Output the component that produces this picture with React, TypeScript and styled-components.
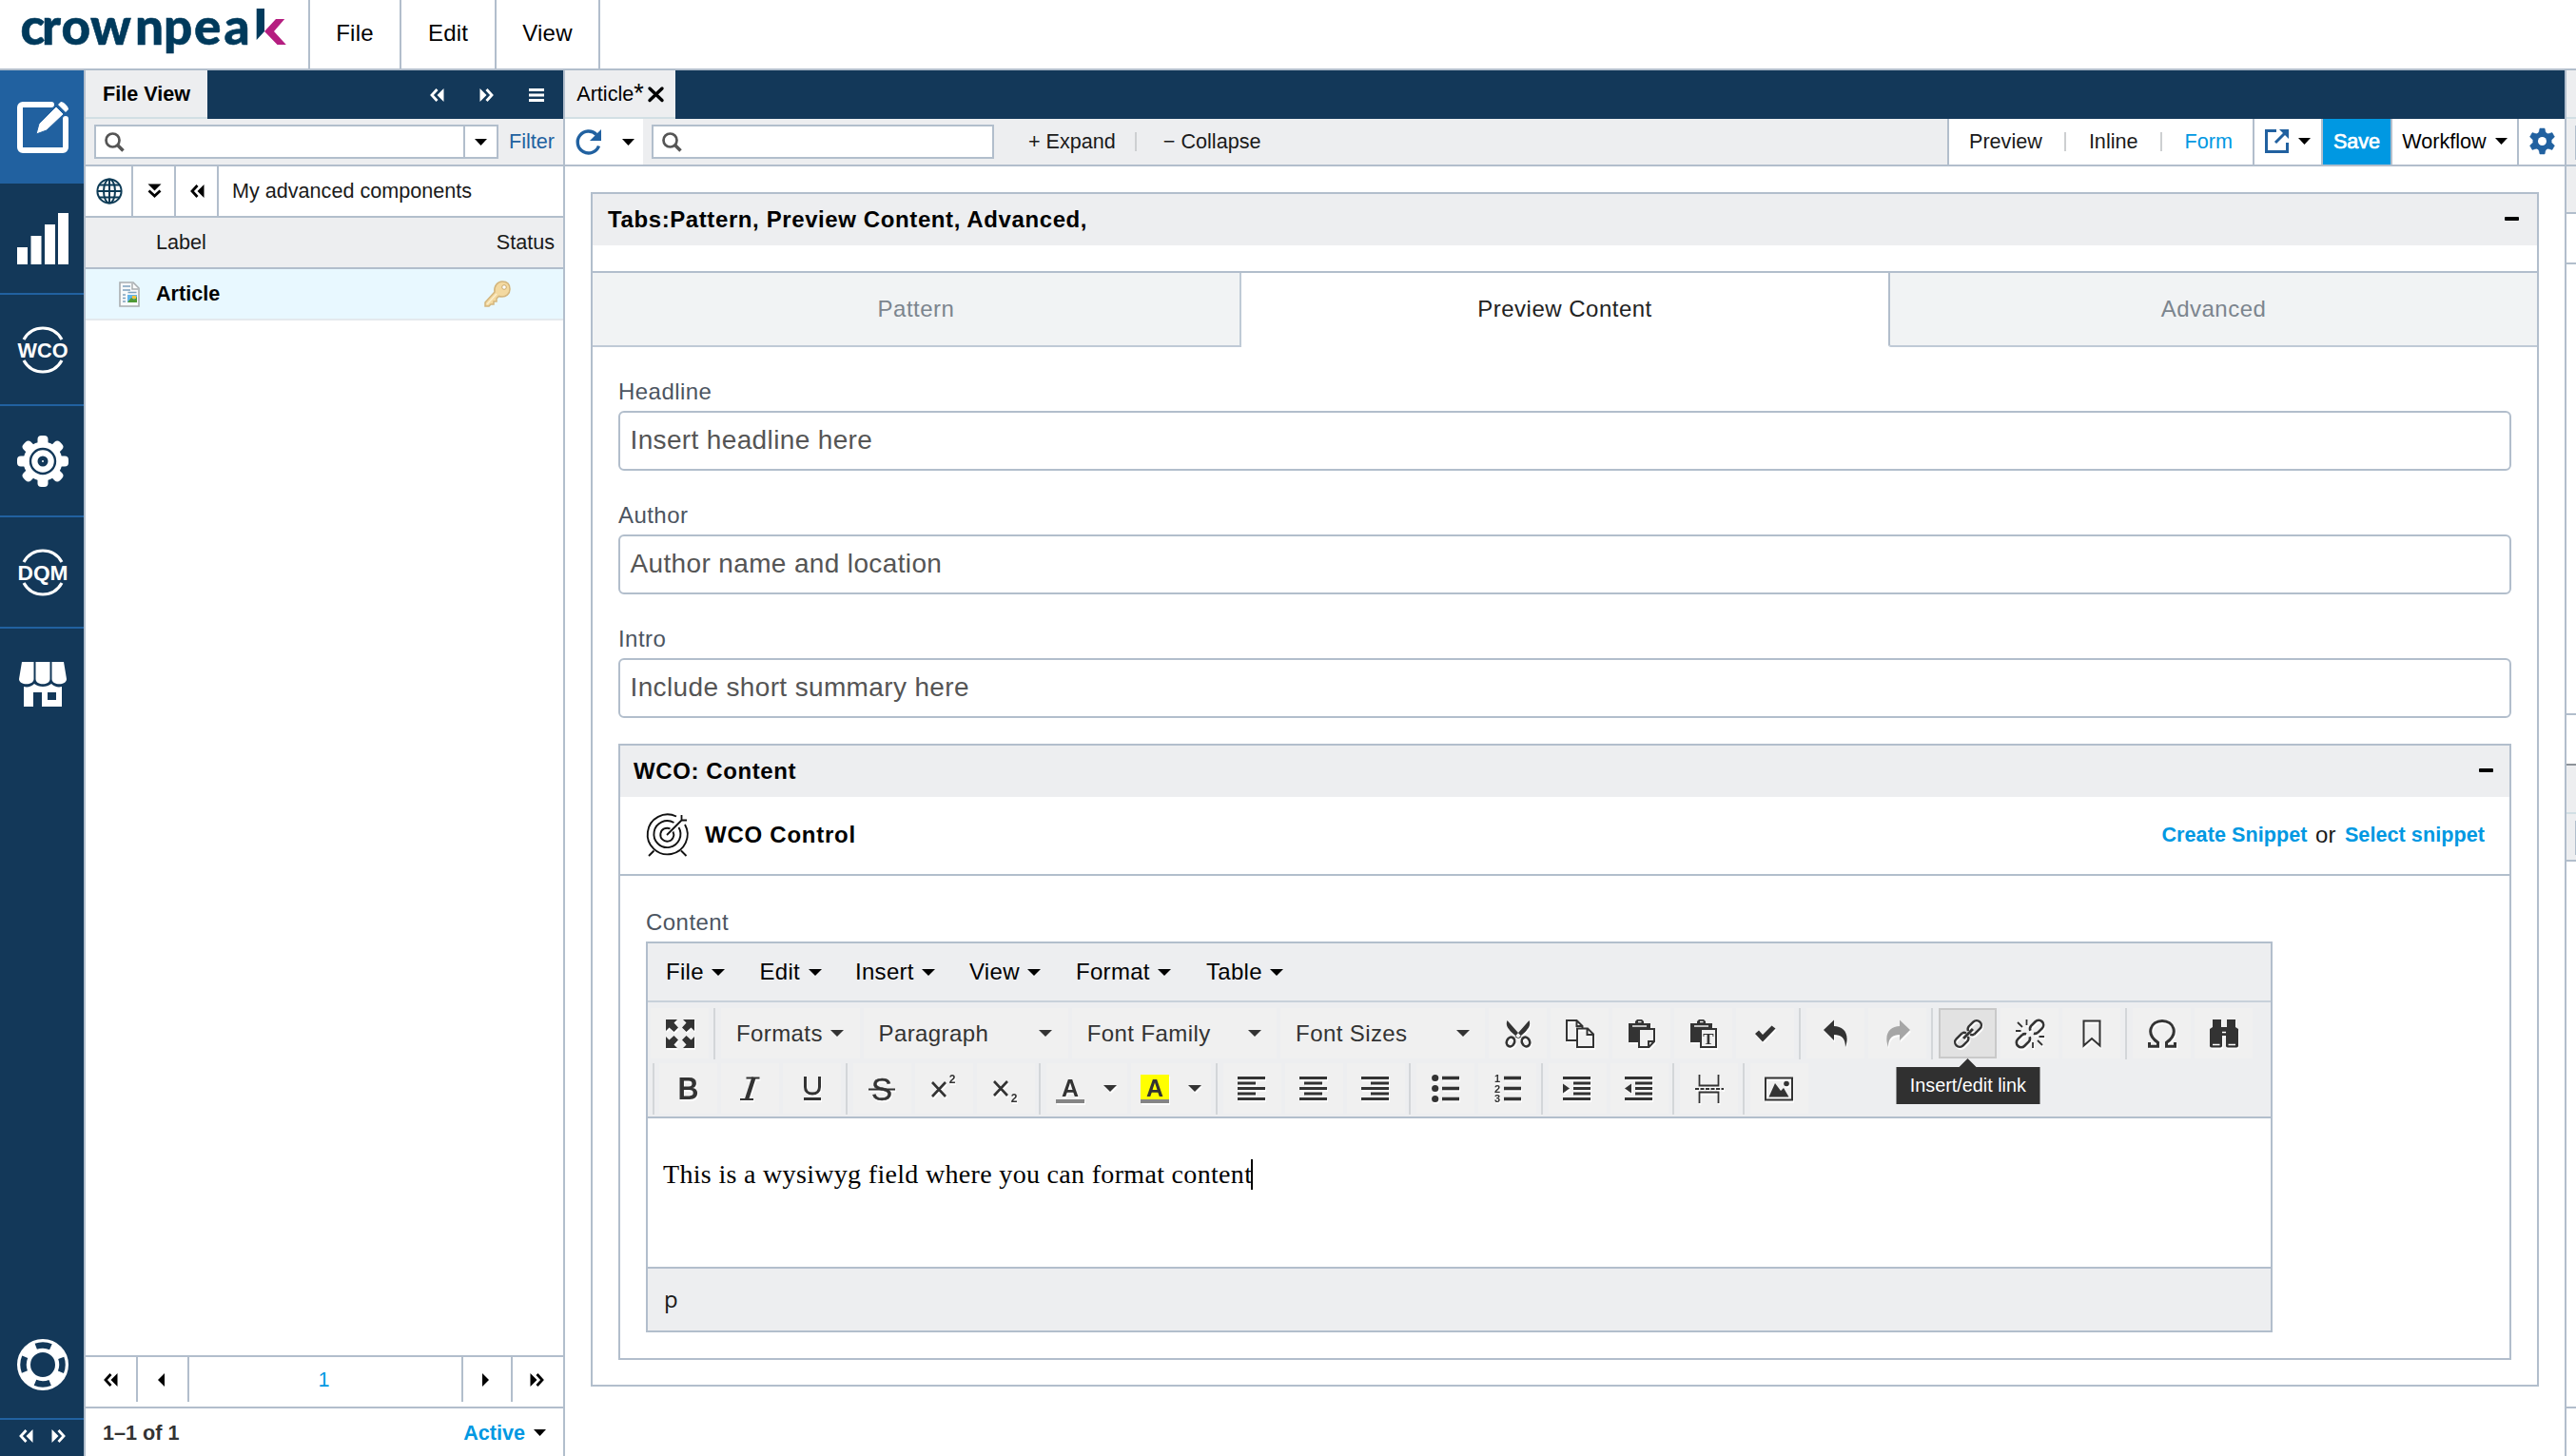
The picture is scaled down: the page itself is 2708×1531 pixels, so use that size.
import React from "react";
import styled, { createGlobalStyle } from "styled-components";

const navy = "#133859";
const blue = "#2161a0";
const sky = "#0098e2";
const line = "#b2becc";
const grey = "#edeef0";
const ink = "#333";

const GlobalStyle = createGlobalStyle`
  * {
    box-sizing: border-box;
  }
  body {
    margin: 0;
    overflow: hidden;
    background: #fff;
    font-family: "Liberation Sans", Arial, sans-serif;
    font-size: 21.6px;
    color: #1a1a1a;
  }
  svg {
    display: block;
    flex: none;
    overflow: visible;
  }
`;

const Page = styled.div`
  height: 100vh;
  display: flex;
  flex-direction: column;
`;

/* ---------- top bar ---------- */

const TopBar = styled.header`
  height: 74px;
  flex: none;
  display: flex;
  border-bottom: 2px solid ${line};
`;

const LogoBox = styled.div`
  width: 326px;
  border-right: 2px solid ${line};
`;

const TopMenu = styled.div<{ $w: number }>`
  width: ${(p) => p.$w}px;
  padding-bottom: 3px;
  display: flex;
  align-items: center;
  justify-content: center;
  border-right: 2px solid ${line};
  font-size: 24px;
  letter-spacing: 0.2px;
  color: #000;
`;

const Body = styled.div`
  flex: 1;
  min-height: 0;
  display: flex;
`;

/* ---------- left navigation ---------- */

const Nav = styled.nav`
  width: 90px;
  flex: none;
  display: flex;
  flex-direction: column;
  background: ${navy};
  border-right: 2px solid ${line};
`;

const NavItem = styled.div<{ $active?: boolean }>`
  height: ${(p) => (p.$active ? 119 : 117)}px;
  padding-left: 2px;
  display: flex;
  align-items: center;
  justify-content: center;
  background: ${(p) => (p.$active ? blue : "transparent")};
  border-bottom: ${(p) => (p.$active ? "none" : `2px solid ${blue}`)};

  &:nth-child(6) {
    border-bottom: none;
  }
`;

const NavHelp = styled.div`
  margin-top: auto;
  height: 85px;
  padding-left: 18px;
  border-bottom: 2px solid ${blue};
`;

const NavPager = styled.div`
  height: 38px;
  padding: 10px 0 0 20px;
  display: flex;
  gap: 19px;
`;

/* ---------- file panel ---------- */

const FilePanel = styled.aside`
  width: 504px;
  flex: none;
  display: flex;
  flex-direction: column;
  border-right: 2px solid ${line};
`;

const TabStrip = styled.div`
  height: 51px;
  flex: none;
  display: flex;
  background: ${navy};
`;

const Tab = styled.div<{ $w: number; $bold?: boolean }>`
  width: ${(p) => p.$w}px;
  display: flex;
  align-items: center;
  justify-content: center;
  background: ${grey};
  border-bottom: 2px solid #d2dfe4;
  font-weight: ${(p) => (p.$bold ? 700 : 400)};
  color: #000;
`;

const StripTools = styled.div`
  margin-left: auto;
  padding-right: 20px;
  display: flex;
  align-items: center;
  gap: 37px;
`;

const FilterRow = styled.div`
  height: 50px;
  flex: none;
  padding: 0 9px;
  display: flex;
  align-items: center;
  justify-content: space-between;
  background: ${grey};
  border-bottom: 2px solid ${line};
  color: ${blue};
`;

const SearchBox = styled.div<{ $w: number }>`
  width: ${(p) => p.$w}px;
  height: 36px;
  padding-left: 9px;
  display: flex;
  align-items: center;
  background: #fff;
  border: 2px solid ${line};
`;

const SearchDrop = styled.div`
  width: 35px;
  height: 100%;
  margin-left: auto;
  display: flex;
  align-items: center;
  justify-content: center;
  border-left: 2px solid ${line};
`;

const PathRow = styled.div`
  height: 54px;
  flex: none;
  display: flex;
  border-bottom: 2px solid ${line};
`;

const PathCell = styled.div<{ $w: number }>`
  width: ${(p) => p.$w}px;
  padding-left: 1px;
  display: flex;
  align-items: center;
  justify-content: center;
  border-right: 2px solid ${line};
`;

const PathName = styled.div`
  padding-left: 14px;
  display: flex;
  align-items: center;
`;

const ListHead = styled.div`
  height: 54px;
  flex: none;
  padding: 0 9px 0 74px;
  display: flex;
  align-items: center;
  justify-content: space-between;
  background: ${grey};
  border-bottom: 2px solid ${line};
`;

const ListRow = styled.div`
  height: 54px;
  flex: none;
  padding: 0 55px 0 35px;
  display: flex;
  align-items: center;
  background: #e8f8ff;
  border-bottom: 2px solid #e4e9ed;
`;

const RowLabel = styled.div`
  margin: 0 auto 0 17px;
  font-weight: 700;
  color: #000;
`;

const Pager = styled.div`
  height: 56px;
  margin-top: auto;
  flex: none;
  padding-bottom: 5px;
  display: flex;
  border-top: 2px solid ${line};
  border-bottom: 2px solid ${line};
`;

const PagerCell = styled.div<{ $w: number }>`
  width: ${(p) => p.$w}px;
  display: flex;
  align-items: center;
  justify-content: center;
  color: ${sky};

  & + & {
    padding-right: 3px;
    border-left: 2px solid ${line};
  }
`;

const PanelFooter = styled.div`
  height: 50px;
  flex: none;
  padding: 1px 18px 0 18px;
  display: flex;
  align-items: center;
  font-weight: 700;
  color: ${ink};
`;

const ActiveFilter = styled.div`
  margin-left: auto;
  display: flex;
  align-items: center;
  gap: 9px;
  color: ${sky};
`;

/* ---------- main area ---------- */

const Main = styled.main`
  flex: 1;
  min-width: 0;
  display: flex;
  flex-direction: column;
`;

const Star = styled.span`
  font-size: 27px;
  line-height: 1;
  margin-right: 4px;
`;

const Toolbar = styled.div`
  height: 50px;
  flex: none;
  display: flex;
  background: ${grey};
  border-bottom: 2px solid ${line};
`;

const RefreshCell = styled.div`
  width: 82px;
  padding: 0 9px 0 11px;
  display: flex;
  align-items: center;
  justify-content: space-between;
  background: #fff;
`;

const SearchCell = styled.div`
  padding: 6px 36px 0 9px;
`;

const ToolText = styled.div`
  padding-bottom: 1px;
  display: flex;
  align-items: center;
`;

const Divider = styled.div`
  width: 2px;
  height: 20px;
  align-self: center;
  background: #cdcfd1;
`;

const ExpandTools = styled.div`
  display: flex;

  ${Divider} {
    margin: 0 28px 0 20px;
  }
`;

const ViewSwitch = styled.div`
  margin-left: auto;
  width: 321px;
  padding: 0 21px 0 21px;
  display: flex;
  justify-content: space-between;
  background: #fff;
  border-left: 2px solid ${line};
`;

const ToolCell = styled.div<{ $w: number; $gap?: number }>`
  width: ${(p) => p.$w}px;
  padding-bottom: 1px;
  display: flex;
  align-items: center;
  justify-content: center;
  gap: ${(p) => p.$gap ?? 0}px;
  background: #fff;
  border-left: 2px solid ${line};
  color: #000;
`;

const SaveCell = styled(ToolCell)`
  background: ${sky};
  color: #fff;
  -webkit-text-stroke: 0.7px #fff;
`;

const Blue = styled.span`
  color: ${sky};
`;

const Content = styled.div`
  padding: 27px 27px 0;
`;

const Card = styled.section`
  height: 1256px;
  border: 2px solid ${line};
`;

const CardHead = styled.div<{ $pad: number }>`
  height: 54px;
  padding: 0 ${(p) => p.$pad}px 0 ${(p) => p.$pad - 3}px;
  display: flex;
  align-items: center;
  justify-content: space-between;
  background: ${grey};
  font-size: 24px;
  font-weight: 700;
  letter-spacing: 0.6px;
  color: #000;
`;

const Minus = styled.i`
  width: 15px;
  height: 4px;
  margin-bottom: 2px;
  border-radius: 1px;
  background: #000;
`;

const FormTabs = styled.div`
  margin-top: 27px;
  height: 80px;
  display: flex;
  border-top: 2px solid ${line};
  font-size: 24px;
  letter-spacing: 0.5px;
`;

const FormTab = styled.div<{ $active?: boolean }>`
  flex: ${(p) => (p.$active ? "0 0 680px" : "1 1 0")};
  display: flex;
  align-items: center;
  justify-content: center;
  color: ${(p) => (p.$active ? "#222" : "#7c858e")};
  background: ${(p) => (p.$active ? "#fff" : "#f1f3f4")};
  border-bottom: 2px solid ${(p) => (p.$active ? "#fff" : "#bfcad6")};

  &:first-child {
    border-right: 2px solid #bfcad6;
  }
  &:last-child {
    border-left: 2px solid ${line};
    border-bottom-left-radius: 3px;
  }
`;

const Fields = styled.div`
  padding: 33px 27px 0;
`;

const Field = styled.div`
  height: 130px;
`;

const Label = styled.div`
  height: 34px;
  line-height: 28px;
  font-size: 24px;
  letter-spacing: 0.45px;
  color: #4c5561;
`;

const Input = styled.div`
  height: 63px;
  padding: 0 0 1px 10.5px;
  display: flex;
  align-items: center;
  border: 2px solid ${line};
  border-radius: 6px;
  font-size: 28px;
  letter-spacing: 0.36px;
  color: #555;
`;

const Wco = styled.section`
  height: 648px;
  margin-top: -6px;
  border: 2px solid ${line};
`;

const WcoRow = styled.div`
  height: 83px;
  padding: 0 26px 1px 28px;
  display: flex;
  align-items: center;
  border-bottom: 2px solid ${line};
`;

const WcoTitle = styled.div`
  margin: 0 auto 0 17px;
  font-size: 24px;
  font-weight: 700;
  letter-spacing: 0.75px;
  color: #000;
`;

const SnippetLink = styled.a`
  font-weight: 700;
  letter-spacing: 0.05px;
  color: ${sky};
`;

const Or = styled.span`
  margin: 0 9.5px 0 8.5px;
  font-size: 24px;
`;

const EditorWrap = styled.div`
  padding: 35px 27px 0;
`;

/* ---------- rich text editor ---------- */

const Editor = styled.div`
  width: 1710px;
  height: 411px;
  display: flex;
  flex-direction: column;
  border: 2px solid ${line};
`;

const MenuBar = styled.div`
  height: 62px;
  padding-left: 19px;
  display: flex;
  align-items: center;
  background: ${grey};
  border-bottom: 2px solid #c8d1da;
  font-size: 24px;
  letter-spacing: 0.3px;
  color: #000;
`;

const MenuItem = styled.div<{ $w: number }>`
  width: ${(p) => p.$w}px;
  display: flex;
  align-items: center;
  gap: 8.5px;
`;

const Tools = styled.div`
  height: 122px;
  padding: 6px 0 0 3px;
  background: ${grey};
  border-bottom: 2px solid ${line};
`;

const ToolRow = styled.div`
  height: 54px;
  margin-bottom: 4px;
  display: flex;
`;

const Group = styled.div`
  display: flex;
  gap: 4px;

  & + & {
    margin-left: 5px;
    padding-left: 6px;
    border-left: 2px solid #d3d6d9;
  }
`;

const SecondRow = styled(ToolRow)`
  margin-left: 2px;

  ${Group}:first-child {
    padding-left: 5px;
    border-left: 2px solid #d3d6d9;
  }

  ${Group} + ${Group} {
    margin-left: 4.5px;
  }
`;

const Btn = styled.div<{ $on?: boolean; $off?: boolean; $w?: number }>`
  position: relative;
  width: ${(p) => p.$w ?? 61}px;
  height: 53px;
  display: flex;
  align-items: center;
  justify-content: center;
  gap: 20px;
  color: ${(p) => (p.$off ? "#a6a6a6" : ink)};
  background: ${(p) => (p.$on ? "#e2e2e2" : "#f0f0f0")};
  border: ${(p) => (p.$on ? "2px solid #c9c9c9" : "none")};

  svg {
    filter: drop-shadow(1.5px 2px 0 rgba(255, 255, 255, 0.9));
  }
`;

const ListBtn = styled.div<{ $w: number }>`
  width: ${(p) => p.$w}px;
  height: 53px;
  padding: 0 16.5px 0 16px;
  display: flex;
  align-items: center;
  justify-content: space-between;
  background: #f0f0f0;
  font-size: 24px;
  letter-spacing: 0.4px;
  color: ${ink};
`;

const Tooltip = styled.div`
  position: absolute;
  top: 60px;
  left: 50%;
  transform: translateX(-50%);
  width: 151px;
  height: 39px;
  line-height: 39px;
  text-align: center;
  font-size: 19.8px;
  color: #fff;
  background: #303030;
  z-index: 2;

  &::before {
    content: "";
    position: absolute;
    left: 66px;
    top: -9px;
    border: 9px solid transparent;
    border-top: none;
    border-bottom-color: #303030;
  }
`;

const EditArea = styled.div`
  flex: 1;
  padding: 43px 0 0 16px;
  display: flex;
  align-items: flex-start;
  line-height: 32px;
  font-family: "Liberation Serif", "Times New Roman", serif;
  font-size: 28px;
  letter-spacing: 0.32px;
  color: #000;
`;

const TextCursor = styled.i`
  width: 2px;
  height: 32px;
  margin-left: -1px;
  background: #000;
`;

const StatusBar = styled.div`
  height: 67px;
  padding: 0 0 3px 17px;
  display: flex;
  align-items: center;
  background: ${grey};
  border-top: 2px solid ${line};
  font-family: "Open Sans", sans-serif;
  font-size: 24px;
`;

/* ---------- strip of the next panel at the right edge ---------- */

const Edge = styled.div`
  width: 12px;
  flex: none;
  border-left: 2px solid ${line};
`;

const EdgePart = styled.div<{ $h: number; $bg?: string; $line?: string }>`
  height: ${(p) => p.$h}px;
  background: ${(p) => p.$bg ?? "#fff"};
  border-bottom: 2px solid ${(p) => p.$line ?? line};
`;

const EdgeSearch = styled(EdgePart)`
  padding: 7px 0 0 9px;

  &::before {
    content: "";
    display: block;
    width: 1px;
    height: 36px;
    background: ${line};
  }
`;

/* ---------- icons ---------- */

const Caret = ({ w = 13, h = 7, c = "#000" }: { w?: number; h?: number; c?: string }) => (
  <svg width={w} height={h} viewBox="0 0 10 6" preserveAspectRatio="none">
    <path d="M0 0h10L5 6z" fill={c} />
  </svg>
);

const Side = ({ flip }: { flip?: boolean }) => (
  <svg width="7" height="14" viewBox="0 0 7 14">
    <path d={flip ? "M0 0l7 7-7 7z" : "M7 0L0 7l7 7z"} />
  </svg>
);

// solid triangle followed by an open chevron
const Double = ({ flip, down, c = "#000" }: { flip?: boolean; down?: boolean; c?: string }) => (
  <svg width="15" height="14" viewBox="0 0 15 14">
    <g transform={down ? "rotate(-90 7.5 7) translate(0.5 0)" : flip ? "translate(15 0) scale(-1 1)" : undefined}>
      <path d="M14.500 0v14L7.500 7z" fill={c} />
      <path d="M7.500 1L2 7l5.500 6" fill="none" stroke={c} strokeWidth="2.800" />
    </g>
  </svg>
);

const Magnifier = () => (
  <svg width="21" height="21" viewBox="0 0 21 21" fill="none" stroke="#555">
    <circle cx="8.500" cy="8.500" r="7" strokeWidth="2.700" />
    <path d="M13.500 13.500l6 6" strokeWidth="3.600" />
  </svg>
);

const Logo = () => (
  <svg width="324" height="72" viewBox="0 0 324 72" role="img" aria-label="crownpeak">
    <text
      x="21.500 44 64.500 95 142 172 204 235.500"
      y="46.500"
      fontFamily="Lato, sans-serif"
      fontWeight="900"
      fontSize="53"
      fill="#003a5c"
      stroke="#003a5c"
      strokeWidth="0.600"
    >
      crownpea
    </text>
    <path d="M269.700 9h8.300v24l-8.300 9z" fill="#003a5c" />
    <path d="M290 20h9.200L288 33l12.800 14h-9.300L278 33z" fill="#b51e80" />
  </svg>
);

const EditIcon = () => (
  <svg width="54" height="54" viewBox="0 0 54 54" fill="none" stroke="#fff">
    <path d="M36 3H6a3 3 0 0 0-3 3v42a3 3 0 0 0 3 3h42a3 3 0 0 0 3-3V18" strokeWidth="6" strokeLinecap="round" />
    <path d="M20 34l3-11L41 5l8 8-18 17z" fill="#fff" stroke={blue} strokeWidth="1" />
    <path d="M43 3l3-3c3 0 8 5 8 8l-3 3z" fill="#fff" stroke="none" />
  </svg>
);

const BarsIcon = () => (
  <svg width="54" height="54" viewBox="0 0 54 54" fill="#fff">
    <path d="M0 36h11v18H0zM14.500 24h11v30h-11zM29 12h11v42H29zM43 0h11v54H43z" />
  </svg>
);

const RingText = ({ text }: { text: string }) => (
  <svg width="54" height="50" viewBox="0 0 54 50">
    <g fill="none" stroke="#fff" strokeWidth="3.200">
      <path d="M7 14C16-2 38-2 47 14" />
      <path d="M7 36c9 16 31 16 40 0" />
    </g>
    <text
      x="27"
      y="32.500"
      textAnchor="middle"
      textLength="53"
      lengthAdjust="spacingAndGlyphs"
      fontSize="22"
      fontWeight="700"
      fill="#fff"
    >
      {text}
    </text>
  </svg>
);

const GearIcon = () => (
  <svg width="54" height="54" viewBox="0 0 54 54" fill="#fff">
    {Array.from({ length: 8 }, (_, i) => (
      <rect key={i} x="21.500" y="0" width="11" height="18" rx="4" transform={`rotate(${45 * i} 27 27)`} />
    ))}
    <circle cx="27" cy="27" r="20.500" />
    <circle cx="27" cy="27" r="13" fill="none" stroke={navy} strokeWidth="2.400" />
    <circle cx="27" cy="27" r="5.500" fill={navy} />
    <circle cx="27" cy="27" r="1" />
  </svg>
);

const SmallGear = () => (
  <svg width="27" height="27" viewBox="0 0 54 54" fill={blue}>
    {[0, 60, 120, 180, 240, 300].map((a) => (
      <path key={a} d="M19 12l3-12h10l3 12z" stroke={blue} strokeWidth="1" transform={`rotate(${a} 27 27)`} />
    ))}
    <circle cx="27" cy="27" r="20" />
    <circle cx="27" cy="27" r="9" fill="#fff" />
  </svg>
);

const ShopIcon = () => (
  <svg width="50" height="47" viewBox="0 0 50 47" fill="#fff">
    <path d="M3 0h12.500v18c0 7-15.500 7-15.500 0z" />
    <path d="M17.500 0h15v18c0 7-15 7-15 0z" />
    <path d="M34.500 0H47l3 18c0 7-15.500 7-15.500 0z" />
    <path
      fillRule="evenodd"
      d="M5 26c4 1 8 0 11-3 5 4 13 4 18 0 3 3 7 4 11 3v21H24V32h-9v15H5zM30 32v8h9v-8z"
    />
  </svg>
);

const RingIcon = () => (
  <svg width="54" height="54" viewBox="0 0 54 54" fill="none">
    <circle cx="27" cy="27" r="20" stroke="#fff" strokeWidth="14" />
    <circle
      cx="27"
      cy="27"
      r="20.500"
      stroke={navy}
      strokeWidth="6.500"
      strokeDasharray="16 16.200"
      strokeDashoffset="8"
    />
  </svg>
);

const Globe = () => (
  <svg width="28" height="28" viewBox="0 0 28 28" fill="none" stroke="#0d3b56" strokeWidth="2">
    <circle cx="14" cy="14" r="12.600" />
    <ellipse cx="14" cy="14" rx="6" ry="12.600" />
    <path d="M14 1v26M1 14h26M3.500 7.500h21M3.500 20.500h21" />
  </svg>
);

const DocIcon = () => (
  <svg width="22" height="27" viewBox="0 0 22 27">
    <path d="M1 1h14l6 6v19H1z" fill="#f7f9fa" stroke="#a9adb0" strokeWidth="1.600" />
    <path d="M14 2v6h6" fill="#fff" stroke="#a9adb0" strokeWidth="1.500" />
    <path d="M4 5h8M4 9h8M4 14h3M4 17.500h3M4 21h3M9.500 11.500h9" stroke="#7ea0bd" strokeWidth="1.700" />
    <path d="M9 14h10v8H9z" fill="#62b4e8" />
    <path d="M9 22l4-5 3 2 3-3v6z" fill="#4f9a35" />
    <path d="M14 15h4v3h-4z" fill="#f2c23a" />
  </svg>
);

const KeyIcon = () => (
  <svg width="28" height="28" viewBox="0 0 28 28">
    <path
      d="M19 1c5 0 8 3 8 8s-4 8-8 8c-1.500 0-2.500 0-3.500-.5L13 19v3h-3v3H7l-2 2H1v-4l10-11c-1-6 3-11 8-11z"
      fill="#f3d9a0"
      stroke="#d3b57c"
      strokeWidth="1.500"
    />
    <circle cx="21" cy="7" r="2.300" fill="#fff" stroke="#c9a96d" />
    <path d="M3 25l10-11" stroke="#fbeecb" strokeWidth="1.500" />
  </svg>
);

const CloseIcon = () => (
  <svg width="17" height="16" viewBox="0 0 17 16" stroke="#000" strokeWidth="3.400" strokeLinecap="round">
    <path d="M2 2l13 12.500M15 2L2 14.500" />
  </svg>
);

const Refresh = () => (
  <svg width="27" height="27" viewBox="0 0 27 27">
    <path d="M22 5.500A11.500 11.500 0 1 0 24.500 17.500" fill="none" stroke={blue} strokeWidth="3.400" />
    <path d="M27 0v12H15z" fill={blue} />
  </svg>
);

const External = () => (
  <svg width="25" height="25" viewBox="0 0 25 25" fill="none" stroke={blue} strokeWidth="3">
    <path d="M12 1.500H1.500v22h22V14" />
    <path d="M11 14L21 4" />
    <path d="M15 0h10v10z" fill={blue} stroke="none" />
  </svg>
);

const Menu = () => (
  <svg width="16" height="14" viewBox="0 0 16 14">
    <path d="M0 0h16v3H0zM0 5.500h16v3H0zM0 11h16v3H0z" fill="#fff" />
  </svg>
);

const Target = () => (
  <svg width="44" height="46" viewBox="0 0 44 46" fill="none" stroke="#111" strokeWidth="1.900">
    <path d="M31 3.500A21 21 0 1 0 40 12" />
    <path d="M28.500 10A14 14 0 1 0 33.500 15" />
    <path d="M24.500 16.500A7 7 0 1 0 27.500 19.500" />
    <path d="M21 23L37 7M36.500 2v5.500H42" strokeWidth="1.800" />
    <path d="M7.500 39.500L2 45M36 39.500l5.500 5.500" />
  </svg>
);

const Icon = ({ children }: { children: React.ReactNode }) => (
  <svg width="30" height="30" viewBox="0 0 30 30" fill="none" stroke="currentColor" strokeWidth="2">
    {children}
  </svg>
);

const Solid = ({ d }: { d: string }) => <path d={d} fill="currentColor" stroke="none" />;

const Glyph = ({ children, ...rest }: React.SVGProps<SVGTextElement>) => (
  <text fill="currentColor" stroke="none" textAnchor="middle" {...rest}>
    {children}
  </text>
);

const arrow = "M0 0h12L8.500 3.500l4.500 5-4.500 4.500-5-4.500L0 12z";

const icons = {
  fullscreen: (
    <Icon>
      {[0, 90, 180, 270].map((a) => (
        <path key={a} d={arrow} fill="currentColor" stroke="none" transform={`rotate(${a} 15 15)`} />
      ))}
    </Icon>
  ),
  cut: (
    <Icon>
      <path
        d="M3.500 1C1.500 6 4 9 8 13.500l7.500 6.500 3-2zM26.500 1c2 5-.5 8-4.500 12.500L14.500 20l-3-2z"
        fill="currentColor"
        stroke="none"
      />
      <ellipse cx="7" cy="23.500" rx="4" ry="5" transform="rotate(25 7 23.500)" strokeWidth="2.600" />
      <ellipse cx="23" cy="23.500" rx="4" ry="5" transform="rotate(-25 23 23.500)" strokeWidth="2.600" />
    </Icon>
  ),
  copy: (
    <Icon>
      <path d="M12 22H1V1h10.500l6 6v3M11.500 1v6h6" />
      <path d="M12 9.500h11l6 6V29H12zM22.500 9.500v6.500H29" />
    </Icon>
  ),
  paste: (
    <Icon>
      <Solid d="M1 4h7V2l2-2h5l2 2v2h7v6H11v14H1z" />
      <path d="M5 7h15M11 2.500h3.500" stroke="#f0f0f0" strokeWidth="1.600" />
      <path d="M12 10h16v13l-5.500 6H12zM22 29v-6h6" fill="#f0f0f0" />
    </Icon>
  ),
  pasteText: (
    <Icon>
      <Solid d="M1 4h7V2l2-2h5l2 2v2h7v6H11v14H1z" />
      <path d="M5 7h15M11 2.500h3.500" stroke="#f0f0f0" strokeWidth="1.600" />
      <path d="M12 10h16v19H12z" fill="#f0f0f0" />
      <Glyph x="20" y="25.500" fontSize="17" fontWeight="700" fontFamily="Liberation Serif">
        T
      </Glyph>
    </Icon>
  ),
  check: (
    <Icon>
      <Solid d="M4 15l4-3.500 4 4.500 9.500-9.500 4 3L12 23.500z" />
    </Icon>
  ),
  undo: (
    <Icon>
      <Solid d="M2 11L13 .5V7c10 0 17 8 12 22 0-10-5-13-12-13v6z" />
    </Icon>
  ),
  redo: (
    <Icon>
      <Solid d="M28 11L17 .5V7C7 7 0 15 5 29c0-10 5-13 12-13v6z" />
    </Icon>
  ),
  link: (
    <Icon>
      <g transform="rotate(-45 15 15)" strokeWidth="2.400">
        <path d="M13 10H4.500a5 5 0 0 0 0 10H11a5 5 0 0 0 4-3" transform="translate(-2 0)" />
        <path d="M17 20h8.500a5 5 0 0 0 0-10H19a5 5 0 0 0-4 3" transform="translate(2 0)" />
        <path d="M8 15h14" strokeWidth="3" />
        <path d="M11 10a5 5 0 0 1 3 3M19 20a5 5 0 0 1-3-3" />
      </g>
    </Icon>
  ),
  unlink: (
    <Icon>
      <g transform="rotate(-45 15 15)" strokeWidth="2.600">
        <path d="M11 10H4.500a5 5 0 0 0 0 10H11a5 5 0 0 0 4-3M14.500 12.500A5 5 0 0 0 11 10" transform="translate(-2.500 0)" />
        <path d="M19 20h6.500a5 5 0 0 0 0-10H19a5 5 0 0 0-4 3M15.500 17.500A5 5 0 0 0 19 20" transform="translate(2.500 0)" />
      </g>
      <path d="M2 3l5 5M11.500 0v6M0 12h5.500M28 27l-5-5M18 30v-6M30 18h-5.500" strokeWidth="1.800" />
    </Icon>
  ),
  bookmark: (
    <Icon>
      <path d="M6.500 1.500h17v26L15 20l-8.500 7.500z" />
    </Icon>
  ),
  omega: (
    <Icon>
      <path d="M1.500 24v4.200h9v-4C-3 15 3 1.500 15 1.500S33 15 19.500 24.200v4h9V24" strokeWidth="3" />
    </Icon>
  ),
  binoculars: (
    <Icon>
      <Solid d="M3 0h9v8h6V0h9v8l3 2v17a2 2 0 0 1-2 2.500H19a2 2 0 0 1-2-2.500V17h-4v10a2 2 0 0 1-2 2.500H2A2 2 0 0 1 0 27V10l3-2z" />
      <path d="M3 26.500h7.500M19.500 26.500H27M13 13.500h4" stroke="#fff" strokeWidth="1.500" />
    </Icon>
  ),
  bold: (
    <Icon>
      <Glyph x="14.500" y="25.500" fontSize="33" fontWeight="700" textLength="22" lengthAdjust="spacingAndGlyphs">
        B
      </Glyph>
    </Icon>
  ),
  italic: (
    <Icon>
      <path d="M10.500 3.500h14M4 26h14" strokeWidth="2.200" />
      <path d="M18.500 3L11 26" strokeWidth="4.200" />
    </Icon>
  ),
  underline: (
    <Icon>
      <path d="M7.500 2v11c0 4.500 3 7 7.500 7s7.500-2.500 7.500-7V2" strokeWidth="3" />
      <path d="M6 25.500h18" strokeWidth="3" />
    </Icon>
  ),
  strike: (
    <Icon>
      <Glyph x="15" y="27" fontSize="33" stroke="currentColor" strokeWidth="0.500">
        S
      </Glyph>
      <path d="M1 15.500h28" strokeWidth="2" />
    </Icon>
  ),
  sup: (
    <Icon>
      <path d="M3 8l14 15M17 8L3 23" strokeWidth="2.600" />
      <Glyph x="24" y="9" fontSize="12" fontWeight="700">
        2
      </Glyph>
    </Icon>
  ),
  sub: (
    <Icon>
      <path d="M3 7l14 15M17 7L3 22" strokeWidth="2.600" />
      <Glyph x="24" y="29" fontSize="12" fontWeight="700">
        2
      </Glyph>
    </Icon>
  ),
  foreColor: (
    <Icon>
      <Glyph x="15" y="23" fontSize="25" fontWeight="700">
        A
      </Glyph>
      <path d="M0 28h30" stroke="#858585" strokeWidth="4" />
    </Icon>
  ),
  backColor: (
    <Icon>
      <path d="M0 0h30v27H0z" fill="#ff0" stroke="none" />
      <Glyph x="15" y="23" fontSize="25" fontWeight="700">
        A
      </Glyph>
      <path d="M0 28h30" stroke="#858585" strokeWidth="4" />
    </Icon>
  ),
  left: (
    <Icon>
      <path d="M0 3.500h29M0 9h19M0 14.500h29M0 20h19M0 25.500h29" strokeWidth="3.200" />
    </Icon>
  ),
  center: (
    <Icon>
      <path d="M0 3.500h29M5 9h19M0 14.500h29M5 20h19M0 25.500h29" strokeWidth="3.200" />
    </Icon>
  ),
  right: (
    <Icon>
      <path d="M0 3.500h29M10 9h19M0 14.500h29M10 20h19M0 25.500h29" strokeWidth="3.200" />
    </Icon>
  ),
  bullets: (
    <Icon>
      <path d="M11 3.500h18M11 14.500h18M11 25.500h18" strokeWidth="3.600" />
      {[3.5, 14.5, 25.5].map((y) => (
        <circle key={y} cx="3.700" cy={y} r="3.600" fill="currentColor" stroke="none" />
      ))}
    </Icon>
  ),
  numbers: (
    <Icon>
      <path d="M11 3.500h18M11 14.500h18M11 25.500h18" strokeWidth="3.600" />
      {["1", "2", "3"].map((n, i) => (
        <Glyph key={n} x="4" y={8 + i * 10.5} fontSize="11" fontWeight="700">
          {n}
        </Glyph>
      ))}
    </Icon>
  ),
  indent: (
    <Icon>
      <path d="M0 3.500h29M11 9h18M11 14.500h18M11 20h18M0 25.500h29" strokeWidth="3.200" />
      <Solid d="M0 9.500l7 5-7 5z" />
    </Icon>
  ),
  outdent: (
    <Icon>
      <path d="M0 3.500h29M11 9h18M11 14.500h18M11 20h18M0 25.500h29" strokeWidth="3.200" />
      <Solid d="M7 9.500l-7 5 7 5z" />
    </Icon>
  ),
  pageBreak: (
    <Icon>
      <path d="M4.500 0v11.500h20V0M4.500 30V18.500h20V30" strokeWidth="1.800" />
      <path d="M0 15h30" strokeWidth="1.800" strokeDasharray="4 1.500" />
    </Icon>
  ),
  image: (
    <Icon>
      <path d="M1 3.500h28v23H1z" />
      <Solid d="M4.500 23.500L11 9l6 8 3-3 5.500 9.500z" />
      <circle cx="23" cy="9.500" r="2.800" fill="currentColor" stroke="none" />
    </Icon>
  ),
};

/* ---------- data ---------- */

const topMenus: [string, number][] = [
  ["File", 96],
  ["Edit", 100],
  ["View", 109],
];

const fields = [
  ["Headline", "Insert headline here"],
  ["Author", "Author name and location"],
  ["Intro", "Include short summary here"],
];

const editorMenus: [string, number][] = [
  ["File", 98.5],
  ["Edit", 100.5],
  ["Insert", 120],
  ["View", 112],
  ["Format", 137],
  ["Table", 100],
];

const App = (): React.JSX.Element => {
  return (
    <Page>
      <GlobalStyle />
      <TopBar>
        <LogoBox>
          <Logo />
        </LogoBox>
        {topMenus.map(([name, w]) => (
          <TopMenu key={name} $w={w}>
            {name}
          </TopMenu>
        ))}
      </TopBar>

      <Body>
        <Nav>
          <NavItem $active>
            <EditIcon />
          </NavItem>
          <NavItem>
            <BarsIcon />
          </NavItem>
          <NavItem>
            <RingText text="WCO" />
          </NavItem>
          <NavItem>
            <GearIcon />
          </NavItem>
          <NavItem>
            <RingText text="DQM" />
          </NavItem>
          <NavItem>
            <ShopIcon />
          </NavItem>
          <NavHelp>
            <RingIcon />
          </NavHelp>
          <NavPager>
            <Double c="#fff" />
            <Double flip c="#fff" />
          </NavPager>
        </Nav>

        <FilePanel>
          <TabStrip>
            <Tab $w={128} $bold>
              File View
            </Tab>
            <StripTools>
              <Double c="#fff" />
              <Double flip c="#fff" />
              <Menu />
            </StripTools>
          </TabStrip>
          <FilterRow>
            <SearchBox $w={425}>
              <Magnifier />
              <SearchDrop>
                <Caret />
              </SearchDrop>
            </SearchBox>
            Filter
          </FilterRow>
          <PathRow>
            <PathCell $w={50}>
              <Globe />
            </PathCell>
            <PathCell $w={45}>
              <Double down />
            </PathCell>
            <PathCell $w={45}>
              <Double />
            </PathCell>
            <PathName>My advanced components</PathName>
          </PathRow>
          <ListHead>
            <span>Label</span>
            <span>Status</span>
          </ListHead>
          <ListRow>
            <DocIcon />
            <RowLabel>Article</RowLabel>
            <KeyIcon />
          </ListRow>
          <Pager>
            <PagerCell $w={53}>
              <Double />
            </PagerCell>
            <PagerCell $w={54}>
              <Side />
            </PagerCell>
            <PagerCell $w={288}>1</PagerCell>
            <PagerCell $w={52}>
              <Side flip />
            </PagerCell>
            <PagerCell $w={55}>
              <Double flip />
            </PagerCell>
          </Pager>
          <PanelFooter>
            1–1 of 1
            <ActiveFilter>
              Active
              <Caret />
            </ActiveFilter>
          </PanelFooter>
        </FilePanel>

        <Main>
          <TabStrip>
            <Tab $w={116}>
              Article
              <Star>*</Star>
              <CloseIcon />
            </Tab>
          </TabStrip>
          <Toolbar>
            <RefreshCell>
              <Refresh />
              <Caret />
            </RefreshCell>
            <SearchCell>
              <SearchBox $w={360}>
                <Magnifier />
              </SearchBox>
            </SearchCell>
            <ExpandTools>
              <ToolText>+ Expand</ToolText>
              <Divider />
              <ToolText>− Collapse</ToolText>
            </ExpandTools>
            <ViewSwitch>
              <ToolText>Preview</ToolText>
              <Divider />
              <ToolText>Inline</ToolText>
              <Divider />
              <ToolText>
                <Blue>Form</Blue>
              </ToolText>
            </ViewSwitch>
            <ToolCell $w={72} $gap={10}>
              <External />
              <Caret />
            </ToolCell>
            <SaveCell $w={73}>Save</SaveCell>
            <ToolCell $w={133} $gap={9}>
              Workflow
              <Caret />
            </ToolCell>
            <ToolCell $w={50}>
              <SmallGear />
            </ToolCell>
          </Toolbar>

          <Content>
            <Card>
              <CardHead $pad={19}>
                Tabs:Pattern, Preview Content, Advanced,
                <Minus />
              </CardHead>
              <FormTabs>
                <FormTab>Pattern</FormTab>
                <FormTab $active>Preview Content</FormTab>
                <FormTab>Advanced</FormTab>
              </FormTabs>
              <Fields>
                {fields.map(([label, value]) => (
                  <Field key={label}>
                    <Label>{label}</Label>
                    <Input>{value}</Input>
                  </Field>
                ))}
                <Wco>
                  <CardHead $pad={17}>
                    WCO: Content
                    <Minus />
                  </CardHead>
                  <WcoRow>
                    <Target />
                    <WcoTitle>WCO Control</WcoTitle>
                    <SnippetLink>Create Snippet</SnippetLink>
                    <Or>or</Or>
                    <SnippetLink>Select snippet</SnippetLink>
                  </WcoRow>
                  <EditorWrap>
                    <Label>Content</Label>
                    <Editor>
                      <MenuBar>
                        {editorMenus.map(([name, w]) => (
                          <MenuItem key={name} $w={w}>
                            {name}
                            <Caret w={14} />
                          </MenuItem>
                        ))}
                      </MenuBar>
                      <Tools>
                        <ToolRow>
                          <Group>
                            <Btn>{icons.fullscreen}</Btn>
                          </Group>
                          <Group>
                            <ListBtn $w={145.5}>
                              Formats
                              <Caret w={14} c={ink} />
                            </ListBtn>
                            {["Paragraph", "Font Family", "Font Sizes"].map((name) => (
                              <ListBtn key={name} $w={215.3}>
                                {name}
                                <Caret w={14} c={ink} />
                              </ListBtn>
                            ))}
                            <Btn>{icons.cut}</Btn>
                            <Btn>{icons.copy}</Btn>
                            <Btn>{icons.paste}</Btn>
                            <Btn>{icons.pasteText}</Btn>
                            <Btn>{icons.check}</Btn>
                          </Group>
                          <Group>
                            <Btn>{icons.undo}</Btn>
                            <Btn $off>{icons.redo}</Btn>
                          </Group>
                          <Group>
                            <Btn $on>
                              {icons.link}
                              <Tooltip>Insert/edit link</Tooltip>
                            </Btn>
                            <Btn>{icons.unlink}</Btn>
                            <Btn>{icons.bookmark}</Btn>
                          </Group>
                          <Group>
                            <Btn>{icons.omega}</Btn>
                            <Btn>{icons.binoculars}</Btn>
                          </Group>
                        </ToolRow>
                        <SecondRow>
                          <Group>
                            <Btn>{icons.bold}</Btn>
                            <Btn>{icons.italic}</Btn>
                            <Btn>{icons.underline}</Btn>
                          </Group>
                          <Group>
                            <Btn>{icons.strike}</Btn>
                            <Btn>{icons.sup}</Btn>
                            <Btn>{icons.sub}</Btn>
                          </Group>
                          <Group>
                            <Btn $w={84.5}>
                              {icons.foreColor}
                              <Caret w={14} c={ink} />
                            </Btn>
                            <Btn $w={84.5}>
                              {icons.backColor}
                              <Caret w={14} c={ink} />
                            </Btn>
                          </Group>
                          <Group>
                            <Btn>{icons.left}</Btn>
                            <Btn>{icons.center}</Btn>
                            <Btn>{icons.right}</Btn>
                          </Group>
                          <Group>
                            <Btn>{icons.bullets}</Btn>
                            <Btn>{icons.numbers}</Btn>
                          </Group>
                          <Group>
                            <Btn>{icons.indent}</Btn>
                            <Btn>{icons.outdent}</Btn>
                          </Group>
                          <Group>
                            <Btn>{icons.pageBreak}</Btn>
                          </Group>
                          <Group>
                            <Btn>{icons.image}</Btn>
                          </Group>
                        </SecondRow>
                      </Tools>
                      <EditArea>
                        This is a wysiwyg field where you can format content
                        <TextCursor />
                      </EditArea>
                      <StatusBar>p</StatusBar>
                    </Editor>
                  </EditorWrap>
                </Wco>
              </Fields>
            </Card>
          </Content>
        </Main>

        <Edge>
          <EdgePart $h={51} $bg={grey} $line="#d2dfe4" />
          <EdgeSearch $h={50} $bg={grey} />
          <EdgePart $h={50} $bg={grey} />
          <EdgePart $h={53} />
          <EdgePart $h={474} />
          <EdgePart $h={53} $line="#8d9399" />
          <EdgePart $h={51} $bg={grey} $line="#d2dfe4" />
          <EdgeSearch $h={50} $bg={grey} />
          <EdgePart $h={575} />
        </Edge>
      </Body>
    </Page>
  );
};

export default App;
